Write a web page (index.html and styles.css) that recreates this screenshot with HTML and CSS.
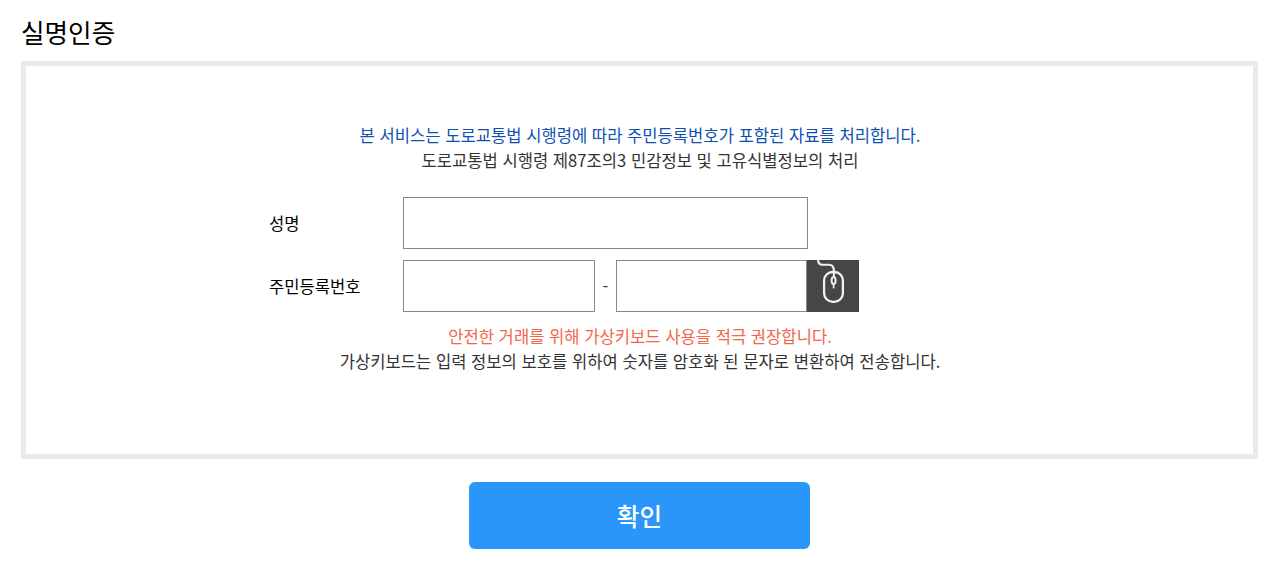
FILE: index.html
```html
<!DOCTYPE html>
<html lang="ko">
<head>
  <meta charset="UTF-8" />
  <meta name="viewport" content="width=device-width, initial-scale=1.0"/>
  <title>실명인증</title>
  <link rel="stylesheet" href="styles.css">
</head>
<body>

  <h1 class="page-title">실명인증</h1>

  <form class="auth-form" onsubmit="return false">
    <div class="auth-box">
      <div class="notice">
        <p class="point-blue">본 서비스는 도로교통법 시행령에 따라 주민등록번호가 포함된 자료를 처리합니다.</p>
        <p>도로교통법 시행령 제87조의3 민감정보 및 고유식별정보의 처리</p>
      </div>

      <div class="fields">
        <div class="field-row">
          <label for="userName">성명</label>
          <input type="text" id="userName" class="input-name">
        </div>
        <div class="field-row">
          <label for="regNo1">주민등록번호</label>
          <input type="text" id="regNo1" class="input-front" maxlength="6">
          <span class="dash">-</span>
          <input type="password" id="regNo2" class="input-back" maxlength="7">
          <button type="button" class="keypad-btn" aria-label="가상키보드">
            <svg width="52" height="52" viewBox="0 0 52 52" fill="none" stroke="#f0f0f0" stroke-linecap="round">
              <path d="M11 -1C11 3 12.5 4.8 15.5 4.8H22C25.8 4.8 26.9 7 26.9 11V17" stroke-width="2.1"/>
              <rect x="17.1" y="12" width="18.8" height="29.8" rx="8.5" stroke-width="2.3"/>
              <ellipse cx="26.6" cy="20.6" rx="2" ry="3.5" stroke-width="2"/>
              <path d="M26.6 24.5V27.7" stroke-width="1.7"/>
            </svg>
          </button>
        </div>
      </div>

      <div class="guide">
        <p class="point-red">안전한 거래를 위해 가상키보드 사용을 적극 권장합니다.</p>
        <p>가상키보드는 입력 정보의 보호를 위하여 숫자를 암호화 된 문자로 변환하여 전송합니다.</p>
      </div>
    </div>

    <button type="submit" class="submit-btn">확인</button>
  </form>

</body>
</html>
```
FILE: styles.css
```css
* {
  box-sizing: border-box;
}

body {
  margin: 0;
  padding: 13px 22px 0 21px;
  background: #fff;
  color: #333;
  font-family: "Noto Sans CJK KR", sans-serif;
  font-size: 16.6px;
  line-height: 25px;
}

p {
  margin: 0;
}

.page-title {
  margin: 0 0 10px;
  color: #000;
  font-size: 25.6px;
  font-weight: 400;
  line-height: 38px;
}

.auth-box {
  height: 398px;
  padding-top: 57px;
  border: 5px solid #ebebeb;
}

.notice,
.guide {
  padding-left: 1px;
  text-align: center;
}

.point-blue {
  color: #0e50b0;
}

.point-red {
  color: #f36649;
}

.fields {
  display: flex;
  flex-direction: column;
  gap: 11px;
  margin: 24px 0 12px 243px;
}

.field-row {
  display: flex;
  align-items: center;
  height: 52px;
}

.field-row label {
  width: 134px;
  color: #000;
}

.field-row input {
  height: 52px;
  padding: 0 10px;
  border: 1px solid #888;
  background: #fff;
  font: inherit;
}

.input-name {
  width: 405px;
}

.input-front {
  width: 192px;
}

.field-row .input-back {
  width: 191px;
}

.dash {
  width: 21px;
  text-align: center;
}

.keypad-btn {
  width: 52px;
  height: 52px;
  padding: 0;
  border: none;
  background: #464646;
  cursor: pointer;
}

.keypad-btn svg {
  display: block;
}

.submit-btn {
  display: block;
  width: 341px;
  height: 67px;
  margin: 23px auto 0;
  padding: 0 0 2px;
  border: none;
  border-radius: 6px;
  background: #2a96fa;
  color: #fff;
  font-family: inherit;
  font-size: 24.6px;
  font-weight: 500;
  cursor: pointer;
}
```
